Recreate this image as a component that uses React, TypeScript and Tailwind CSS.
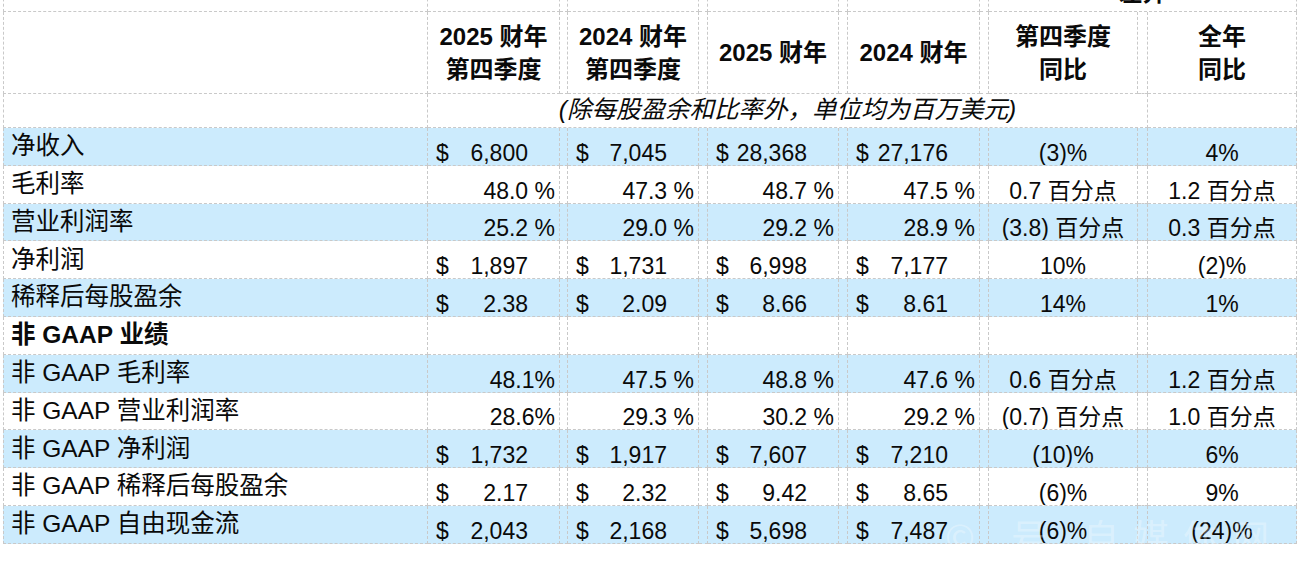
import React from "react";

const COLS =
  "grid grid-cols-[425px_132px_8px_131px_9px_131px_9px_132px_9px_149px_10px_149px]";
const line = "border-r border-b border-dashed border-[#c9c9c9]";

type Cell = { kind: "d" | "p" | "c"; v: string };
const d = (v: string): Cell => ({ kind: "d", v });
const p = (v: string): Cell => ({ kind: "p", v });
const c = (v: string): Cell => ({ kind: "c", v });

type Row = { label: string; blue?: boolean; bold?: boolean; cells: Cell[] };

const rows: Row[] = [
  { label: "净收入", blue: true, cells: [d("6,800"), d("7,045"), d("28,368"), d("27,176"), c("(3)%"), c("4%")] },
  { label: "毛利率", cells: [p("48.0 %"), p("47.3 %"), p("48.7 %"), p("47.5 %"), c("0.7 百分点"), c("1.2 百分点")] },
  { label: "营业利润率", blue: true, cells: [p("25.2 %"), p("29.0 %"), p("29.2 %"), p("28.9 %"), c("(3.8) 百分点"), c("0.3 百分点")] },
  { label: "净利润", cells: [d("1,897"), d("1,731"), d("6,998"), d("7,177"), c("10%"), c("(2)%")] },
  { label: "稀释后每股盈余", blue: true, cells: [d("2.38"), d("2.09"), d("8.66"), d("8.61"), c("14%"), c("1%")] },
  { label: "非 GAAP 业绩", bold: true, cells: [] },
  { label: "非 GAAP 毛利率", blue: true, cells: [p("48.1%"), p("47.5 %"), p("48.8 %"), p("47.6 %"), c("0.6 百分点"), c("1.2 百分点")] },
  { label: "非 GAAP 营业利润率", cells: [p("28.6%"), p("29.3 %"), p("30.2 %"), p("29.2 %"), c("(0.7) 百分点"), c("1.0 百分点")] },
  { label: "非 GAAP 净利润", blue: true, cells: [d("1,732"), d("1,917"), d("7,607"), d("7,210"), c("(10)%"), c("6%")] },
  { label: "非 GAAP 稀释后每股盈余", cells: [d("2.17"), d("2.32"), d("9.42"), d("8.65"), c("(6)%"), c("9%")] },
  { label: "非 GAAP 自由现金流", blue: true, cells: [d("2,043"), d("2,168"), d("5,698"), d("7,487"), c("(6)%"), c("(24)%")] },
];

const ValueCell = ({ cell }: { cell?: Cell }) => {
  if (!cell) return <div className={line} />;
  if (cell.kind === "d") {
    return (
      <div className={`${line} flex items-end justify-between overflow-hidden pl-[8px] pr-[31px] text-[23px] leading-none`}>
        <span>$</span>
        <span>{cell.v}</span>
      </div>
    );
  }
  if (cell.kind === "p") {
    return (
      <div className={`${line} flex items-end justify-end overflow-hidden pr-[4px] text-[23px] leading-none`}>
        {cell.v}
      </div>
    );
  }
  return (
    <div className={`${line} flex items-end justify-center overflow-hidden whitespace-nowrap text-[23px] leading-none`}>
      {cell.v}
    </div>
  );
};

const Head = ({ lines }: { lines: string[] }) => (
  <div className={`${line} flex flex-col items-center justify-center text-[24px] font-bold leading-[33px]`}>
    {lines.map((l) => (
      <span key={l}>{l}</span>
    ))}
  </div>
);

const Spacer = () => <div className={line} />;

export default function App() {
  return (
    <div className="relative min-h-screen overflow-hidden bg-white">
      <div className="-mt-[28px] ml-[3px] w-[1294px] font-['Liberation_Sans','Noto_Sans_CJK_SC',sans-serif] text-[#0a0a0a]">
        {/* cut-off top row */}
        <div className={`${COLS} h-[40px]`}>
          <div className={`${line} border-l`} />
          <Spacer />
          <Spacer />
          <Spacer />
          <Spacer />
          <Spacer />
          <Spacer />
          <Spacer />
          <Spacer />
          <div className={`${line} col-span-3 flex items-end justify-center pb-[6px] text-[24px] font-bold leading-none`}>
            差异
          </div>
        </div>

        {/* header */}
        <div className={`${COLS} h-[82px]`}>
          <div className={`${line} border-l`} />
          <Head lines={["2025 财年", "第四季度"]} />
          <Spacer />
          <Head lines={["2024 财年", "第四季度"]} />
          <Spacer />
          <Head lines={["2025 财年"]} />
          <Spacer />
          <Head lines={["2024 财年"]} />
          <Spacer />
          <Head lines={["第四季度", "同比"]} />
          <Spacer />
          <Head lines={["全年", "同比"]} />
        </div>

        {/* units note */}
        <div className={`${COLS} h-[34px]`}>
          <div className={`${line} border-l`} />
          <div className={`${line} col-span-10 flex items-center justify-center text-[24.5px] italic leading-none`}>
            (除每股盈余和比率外，单位均为百万美元)
          </div>
          <Spacer />
        </div>

        {rows.map((r) => (
          <div key={r.label} className={`${COLS} h-[37.8px] ${r.blue ? "bg-[#ccebfd]" : "bg-white"}`}>
            <div
              className={`${line} border-l flex items-end pb-[6px] pl-[7px] text-[24.5px] leading-none ${r.bold ? "font-bold" : ""}`}
            >
              {r.label}
            </div>
            <ValueCell cell={r.cells[0]} />
            <Spacer />
            <ValueCell cell={r.cells[1]} />
            <Spacer />
            <ValueCell cell={r.cells[2]} />
            <Spacer />
            <ValueCell cell={r.cells[3]} />
            <Spacer />
            <ValueCell cell={r.cells[4]} />
            <Spacer />
            <ValueCell cell={r.cells[5]} />
          </div>
        ))}
      </div>

      {/* faint watermark */}
      <div className="pointer-events-none absolute left-[945px] top-[508px] font-['Noto_Sans_CJK_SC',sans-serif] text-[36px] tracking-[14px] text-white/30">
        ©  号 自媒体网
      </div>
    </div>
  );
}
